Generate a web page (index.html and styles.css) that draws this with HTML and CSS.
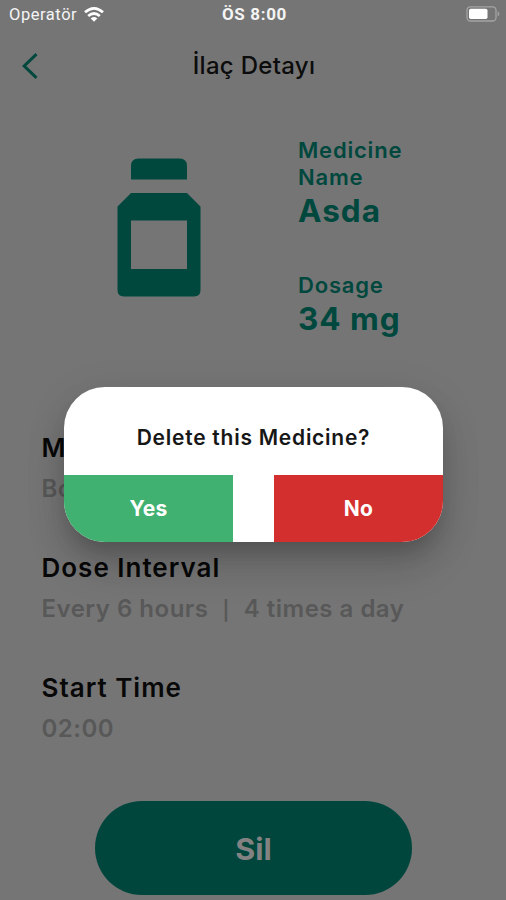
FILE: index.html
```html
<!DOCTYPE html>
<html lang="tr">
<head>
<meta charset="utf-8">
<title>İlaç Detayı</title>
<link rel="stylesheet" href="styles.css">
</head>
<body>
<main class="screen">
  <header class="status">
    <div class="carrier"><span>Operatör</span>
      <svg class="wifi" viewBox="0 0 20 15"><g fill="none" stroke="#fff" stroke-width="2.7"><path d="M1 5.3Q10-2.5 19 5.3"/><path d="M4.2 9Q10 4 15.8 9"/></g><path d="M6.7 11.4Q10 8.7 13.3 11.4L10 14.8Z" fill="#fff"/></svg>
    </div>
    <span class="clock">ÖS 8:00</span>
    <svg class="battery" viewBox="0 0 34 16"><rect x="1" y=".8" width="29" height="14.2" rx="3.5" fill="none" stroke="#a4a4a4" stroke-width="1.3"/><rect x="3" y="2.8" width="18.5" height="10.3" rx="1.8" fill="#fff"/><path d="M31.7 5.2Q33.4 6 33.4 7.9T31.7 10.6Z" fill="#a4a4a4"/></svg>
  </header>
  <nav class="bar">
    <svg class="back" viewBox="0 0 18 28"><path d="M15.5 2.2L3.2 14L15.5 25.8" fill="none" stroke="#00483d" stroke-width="3"/></svg>
    <h1 class="title">İlaç Detayı</h1>
  </nav>
  <section class="summary">
    <svg class="bottle" viewBox="0 0 84 140"><path fill="#00483e" d="M14 21.5V8Q14 .5 21.5.5H62.5Q70 .5 70 8V21.5ZM14 35H70L83.5 48.5V132Q83.5 138.5 77 138.5H7Q.5 138.5.5 132V48.5Z"/><path fill="#757575" d="M14 62.5H70V111H14Z"/></svg>
    <div class="facts">
      <div class="fact"><div class="name">Medicine<br>Name</div><div class="value">Asda</div></div>
      <div class="fact"><div class="name">Dosage</div><div class="value">34 mg</div></div>
    </div>
  </section>
  <section class="details">
    <div class="detail"><h2 class="label">M</h2><p class="text">Bo</p></div>
    <div class="detail"><h2 class="label">Dose Interval</h2><p class="text">Every 6 hours&nbsp; <span class="divider">|</span>&nbsp; 4 times a day</p></div>
    <div class="detail"><h2 class="label">Start Time</h2><p class="text">02:00</p></div>
  </section>
  <button class="delete">Sil</button>
</main>
<div class="dialog" role="dialog">
  <p class="question">Delete this Medicine?</p>
  <div class="actions"><button class="action yes">Yes</button><button class="action no">No</button></div>
</div>
</body>
</html>
```
FILE: styles.css
```css
* { box-sizing: border-box; }
body { margin: 0; width: 506px; height: 900px; overflow: hidden; background: #757575; font-family: Inter, "Liberation Sans", sans-serif; }
h1, h2, p { margin: 0; }
button { border: 0; padding: 0; font-family: inherit; }
.screen { height: 900px; display: flex; flex-direction: column; }
.status { height: 30px; padding: 0 6px 0 9px; display: grid; grid-template-columns: 1fr auto 1fr; align-items: center; color: #f4f4f4; }
.carrier { display: flex; align-items: center; gap: 7px; font: 400 16.5px/28px Roboto, sans-serif; letter-spacing: .55px; }
.wifi { width: 20px; height: 15px; margin-top: -2px; }
.clock { font: 700 17px/28px Roboto, sans-serif; letter-spacing: .65px; margin-top: -2px; }
.battery { width: 34px; height: 16px; justify-self: end; margin-top: -2px; }
.bar { height: 70px; display: grid; grid-template-columns: 40px 1fr 40px; align-items: center; padding: 1px 19px 0 21px; }
.back { width: 18px; height: 28px; }
.title { font-size: 24px; line-height: 30px; font-weight: 450; text-align: center; letter-spacing: .3px; color: #0c0c0c; padding-top: 1px; }
.summary { height: 328px; padding: 37px 0 0 117px; display: flex; gap: 97px; }
.bottle { width: 84px; height: 140px; margin-top: 21px; }
.facts { color: #00483e; }
.fact { margin-bottom: 41px; }
.name { font-size: 22px; line-height: 27px; font-weight: 620; letter-spacing: .8px; }
.value { font-size: 31.5px; line-height: 40px; font-weight: 650; letter-spacing: 1px; }
.details { padding-left: 41.5px; }
.detail { height: 120px; }
.label { font-size: 26px; line-height: 40px; font-weight: 620; letter-spacing: 1px; color: #080808; }
.text { font-size: 24px; line-height: 42px; font-weight: 620; letter-spacing: .5px; color: #585858; white-space: nowrap; }
.divider { display: inline-block; font-size: 19px; line-height: 20px; width: 9px; text-align: center; }
.delete { width: 317px; height: 94px; margin: 13px auto 0 95px; border-radius: 47px; background: #00463c; color: #828282; font-size: 30.5px; font-weight: 700; }
.dialog { position: absolute; left: 64px; top: 387px; width: 379px; height: 155px; border-radius: 41px; overflow: hidden; background: #fff; box-shadow: 0 14px 20px -6px rgba(0,0,0,.17), 0 26px 38px 2px rgba(0,0,0,.12), 0 8px 42px 6px rgba(0,0,0,.06); }
.question { height: 88px; padding-top: 37px; font-size: 21px; line-height: 28px; font-weight: 570; letter-spacing: .75px; text-align: center; color: #171717; }
.actions { height: 67px; display: flex; justify-content: space-between; }
.action { width: 169px; font-size: 21px; font-weight: 750; color: #fff; letter-spacing: .2px; }
.yes { background: #40b170; }
.no { background: #d42f2f; }
```
